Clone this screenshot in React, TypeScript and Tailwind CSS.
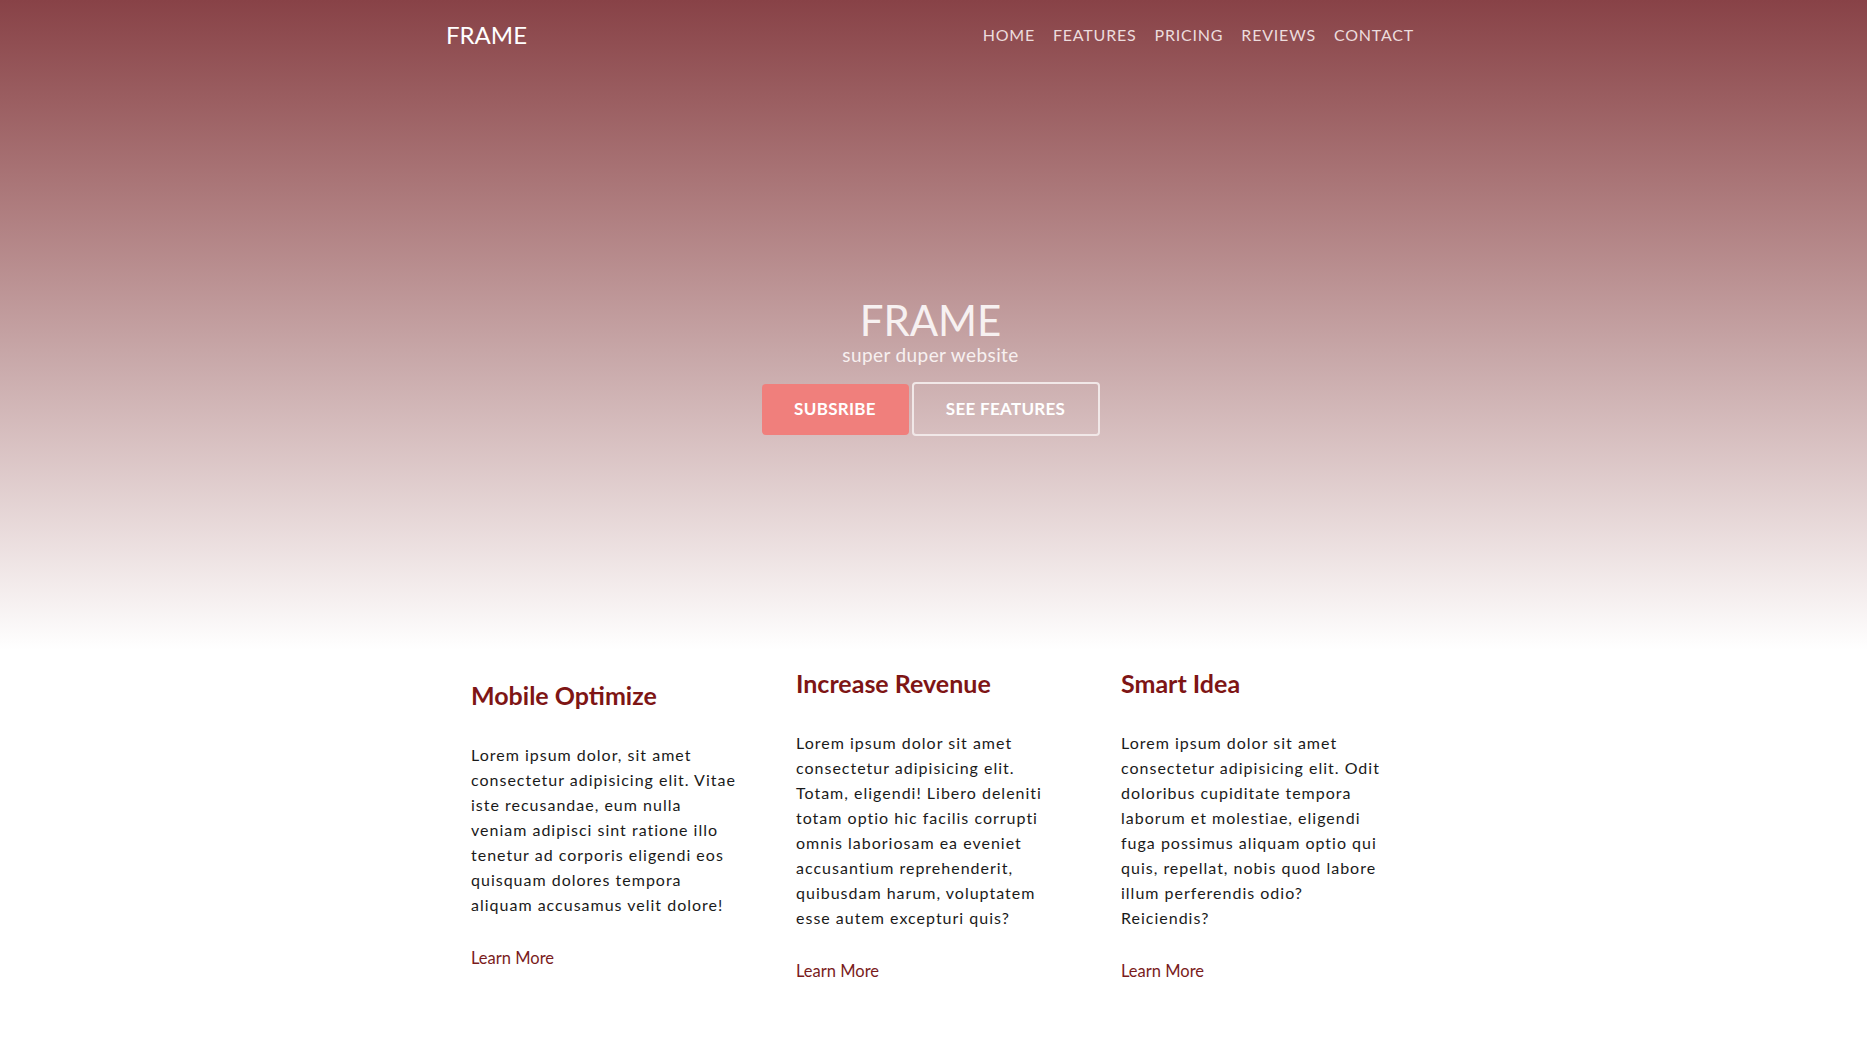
const features = [
  {
    title: "Mobile Optimize",
    text: "Lorem ipsum dolor, sit amet consectetur adipisicing elit. Vitae iste recusandae, eum nulla veniam adipisci sint ratione illo tenetur ad corporis eligendi eos quisquam dolores tempora aliquam accusamus velit dolore!",
    offset: true,
  },
  {
    title: "Increase Revenue",
    text: "Lorem ipsum dolor sit amet consectetur adipisicing elit. Totam, eligendi! Libero deleniti totam optio hic facilis corrupti omnis laboriosam ea eveniet accusantium reprehenderit, quibusdam harum, voluptatem esse autem excepturi quis?",
    offset: false,
  },
  {
    title: "Smart Idea",
    text: "Lorem ipsum dolor sit amet consectetur adipisicing elit. Odit doloribus cupiditate tempora laborum et molestiae, eligendi fuga possimus aliquam optio qui quis, repellat, nobis quod labore illum perferendis odio? Reiciendis?",
    offset: false,
  },
];

const navLinks = ["Home", "Features", "Pricing", "Reviews", "Contact"];

export default function App() {
  return (
    <div className="min-h-screen bg-white font-['Lato','Noto_Sans',sans-serif]">
      <section className="h-[650px] bg-gradient-to-b from-[#884247] via-[#c8a8a9] via-55% to-white flex flex-col">
        <header className="w-[975px] mx-auto h-[70px] flex items-center justify-between">
          <a className="text-white text-[24px] leading-none">FRAME</a>
          <nav className="flex items-center gap-[18px] pr-[7px]">
            {navLinks.map((l) => (
              <a key={l} className="text-[16px] uppercase tracking-[0.8px] text-[#ecdcdd]">
                {l}
              </a>
            ))}
          </nav>
        </header>

        <div className="flex flex-col items-center pt-[227px] pr-[6px]">
          <h1 className="text-[42px] leading-[46px] text-[#f7f1f1]">FRAME</h1>
          <p className="text-[19px] leading-[24px] text-[#f7f0f0] tracking-[0.4px]">super duper website</p>
          <div className="mt-[15px] flex items-center gap-[3px]">
            <button className="w-[147px] h-[51px] rounded-[4px] bg-[#f07f7c] text-white text-[17px] font-bold tracking-[0.3px]">
              SUBSRIBE
            </button>
            <button className="w-[188px] h-[54px] rounded-[4px] border-2 border-[#f1e8e8] text-white text-[17px] font-bold tracking-[0.3px]">
              SEE FEATURES
            </button>
          </div>
        </div>
      </section>

      <section className="w-[975px] mx-auto grid grid-cols-3 pt-[20px] pb-[60px]">
        {features.map((f) => (
          <div key={f.title} className={`pl-[25px] pr-[23px] ${f.offset ? "mt-[12px]" : ""}`}>
            <h2 className="text-[25px] leading-[26px] font-bold text-[#7e1515]">{f.title}</h2>
            <p className="mt-[34px] w-[267px] text-[16px] leading-[25px] tracking-[1px] text-[#1a1a1a]">
              {f.text}
            </p>
            <a className="block mt-[30px] text-[16.5px] leading-[22px] text-[#7a1c1c]">Learn More</a>
          </div>
        ))}
      </section>
    </div>
  );
}
